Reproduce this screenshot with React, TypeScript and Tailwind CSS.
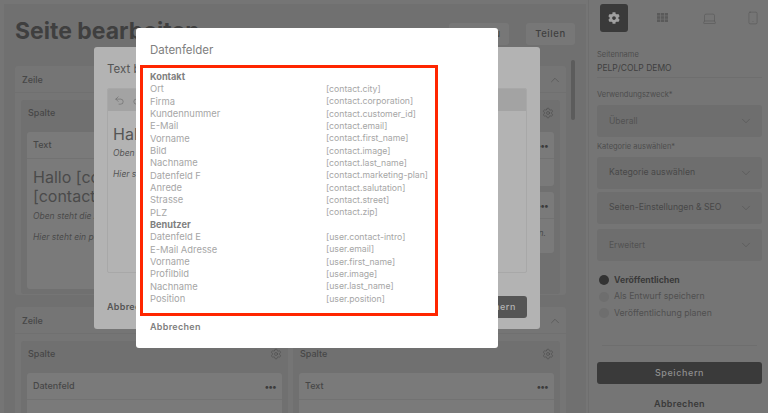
import React from "react";
import { ChevronDown, ChevronUp, Settings, Undo2, Redo2, Laptop, Smartphone } from "lucide-react";
import { FaCog } from "react-icons/fa";

const kontakt = [
  ["Ort", "[contact.city]"], ["Firma", "[contact.corporation]"], ["Kundennummer", "[contact.customer_id]"],
  ["E-Mail", "[contact.email]"], ["Vorname", "[contact.first_name]"], ["Bild", "[contact.image]"],
  ["Nachname", "[contact.last_name]"], ["Datenfeld F", "[contact.marketing-plan]"], ["Anrede", "[contact.salutation]"],
  ["Strasse", "[contact.street]"], ["PLZ", "[contact.zip]"],
];
const benutzer = [
  ["Datenfeld E", "[user.contact-intro]"], ["E-Mail Adresse", "[user.email]"], ["Vorname", "[user.first_name]"],
  ["Profilbild", "[user.image]"], ["Nachname", "[user.last_name]"], ["Position", "[user.position]"],
];

function Row({ a, b }: { a: string; b: string }) {
  return (
    <div className="flex h-[12.33px] items-center text-[#a6a6a6]">
      <span className="w-[176px] shrink-0 text-[9.4px]">{a}</span>
      <span className="text-[8.7px]">{b}</span>
    </div>
  );
}

function Dots() {
  return <span className="text-[9px] font-bold leading-none tracking-[-0.5px] text-[#3c3c3c]">•••</span>;
}

function Select({ label, strong }: { label: string; strong?: boolean }) {
  return (
    <div className="flex h-8 items-center justify-between rounded-[3px] bg-[#6e6e6e] pl-[12px] pr-[9px]">
      <span className={strong ? "text-[8.7px] text-[#484848]" : "text-[8.5px] text-[#525252]"}>{label}</span>
      <ChevronDown size={14} strokeWidth={0.9} className="text-[#4f4f4f]" />
    </div>
  );
}

function Radio({ label, active }: { label: string; active?: boolean }) {
  return (
    <div className="flex h-[16.5px] items-center gap-[5px] pl-[2px]">
      <span className={active ? "size-[10px] rounded-full bg-[#333333]" : "size-[10px] rounded-full bg-[#6e6e6e]"} />
      <span className={active ? "text-[8.7px] font-bold text-[#3a3a3a]" : "text-[8.7px] text-[#505050]"}>{label}</span>
    </div>
  );
}

function Card({ title, className, children }: { title: string; className: string; children?: React.ReactNode }) {
  return (
    <div className={"overflow-hidden rounded-[3px] bg-[#7a7a7a] " + className}>
      <div className="flex h-[27px] items-center justify-between border-b border-[#727272] pl-[6px] pr-[6px] text-[9px] font-medium text-[#474747]">
        <span>{title}</span>
        <Dots />
      </div>
      {children}
    </div>
  );
}

function Column({ className, children }: { className: string; children?: React.ReactNode }) {
  return (
    <div className={"w-[267px] rounded-[3px] bg-[#707070] px-[6px] " + className}>
      <div className="flex h-[32px] items-center justify-between pb-[6px] pl-[1px] text-[9px] font-medium text-[#474747]">
        <span>Spalte</span>
        <Settings size={12} strokeWidth={1} className="text-[#444444]" />
      </div>
      {children}
    </div>
  );
}

function RowHeader() {
  return (
    <div className="flex h-[27px] items-center justify-between border-b border-[#707070] pl-[7px] pr-[4px] pt-[1px] text-[9px] font-medium text-[#474747]">
      <span>Zeile</span>
      <ChevronUp size={14} strokeWidth={0.9} />
    </div>
  );
}

export default function App() {
  return (
    <div className="relative h-[413px] w-[768px] overflow-hidden bg-[#757575] font-['Inter','Noto_Sans',sans-serif]">
      <div className="flex h-full">
        <main className="h-full w-[589px] shrink-0 border-r border-[#6e6e6e] pb-0 pl-[4px] pr-[2px] pt-[4px]">
          <div className="h-full overflow-hidden bg-[#707070] px-[11px]">
            <div className="flex h-[62px] items-start justify-between">
              <h1 className="mt-[14px] text-[23px] font-bold leading-[26px] text-[#3f3f3f]">Seite bearbeiten</h1>
              <div className="mt-[19px] flex gap-[17px]">
                <div className="flex h-[22px] w-[60px] items-center justify-center rounded-[3px] bg-[#777777] text-[9.5px] text-[#3f3f3f]">Vorschau</div>
                <div className="flex h-[22px] w-[49px] items-center justify-center rounded-[3px] bg-[#777777] text-[9.5px] font-medium tracking-[0.6px] text-[#3f3f3f]">Teilen</div>
              </div>
            </div>
            <div className="flex justify-between">
              <div className="flex w-[551px] flex-col gap-[12px]">
                <section className="h-[229px] rounded-[3px] bg-[#757575]">
                  <RowHeader />
                  <div className="mt-[7px] flex gap-[5px] px-[6px]">
                    <Column className="h-[194px]">
                      <Card title="Text" className="h-[157px]">
                        <div className="px-[6px] pt-[9px] text-[#4a4a4a]">
                          <p className="text-[16px] leading-[18.5px]">Hallo [contact.first_name] [contact.last_name]</p>
                          <p className="mt-[5px] text-[8.5px] italic leading-[13px]">Oben steht die Anrede mit dem Vornamen.</p>
                          <p className="mt-[8px] text-[8.5px] italic leading-[13px]">Hier steht ein personalisierter Text.</p>
                        </div>
                      </Card>
                    </Column>
                    <Column className="h-[194px]">
                      <Card title="Text" className="h-[54px]" />
                      <Card title="Text" className="mt-[6px] h-[61px]">
                        <p className="pr-[8px] pt-[8px] text-right text-[8.5px] italic leading-[13px] text-[#4a4a4a]">Vornamen.</p>
                      </Card>
                    </Column>
                  </div>
                </section>
                <section className="h-[120px] rounded-[3px] bg-[#757575]">
                  <RowHeader />
                  <div className="mt-[7px] flex gap-[5px] px-[6px]">
                    <Column className="h-[90px]">
                      <Card title="Datenfeld" className="h-[60px]">
                        <div className="px-[6px] pt-[10px] text-[9px] text-[#4a4a4a]">Logotext</div>
                      </Card>
                    </Column>
                    <Column className="h-[90px]">
                      <Card title="Text" className="h-[60px]">
                        <div className="px-[6px] pt-[10px] text-[9px] text-[#4a4a4a]">Text</div>
                      </Card>
                    </Column>
                  </div>
                </section>
              </div>
              <div className="mt-[-6px] h-[60px] w-[4px] shrink-0 rounded-full bg-[#5c5c5c]" />
            </div>
          </div>
        </main>
        <aside className="flex h-full flex-1 flex-col pl-[8px] pr-[6px]">
          <div className="flex h-[32px] items-start justify-between pl-[3px] pr-[2px] pt-[4px]">
            <div className="flex size-[28px] items-center justify-center rounded-[3px] bg-[#3a3a3a]">
              <FaCog size={12} className="text-[#a0a0a0]" />
            </div>
            <svg width="11" height="9" viewBox="0 0 11 9" className="mr-[6px] mt-[9px]" fill="#5a5a5a">
              <rect x="0" y="0" width="3.2" height="2.6" /><rect x="3.9" y="0" width="3.2" height="2.6" /><rect x="7.8" y="0" width="3.2" height="2.6" />
              <rect x="0" y="3.2" width="3.2" height="2.6" /><rect x="3.9" y="3.2" width="3.2" height="2.6" /><rect x="7.8" y="3.2" width="3.2" height="2.6" />
              <rect x="0" y="6.4" width="3.2" height="2.6" /><rect x="3.9" y="6.4" width="3.2" height="2.6" /><rect x="7.8" y="6.4" width="3.2" height="2.6" />
            </svg>
            <Laptop size={15} strokeWidth={0.9} className="mt-[7px] text-[#555555]" />
            <Smartphone size={14} strokeWidth={0.9} className="mt-[7px] text-[#555555]" />
          </div>
          <label className="mt-[19px] text-[7.5px] leading-[8px] text-[#4d4d4d]">Seitenname</label>
          <div className="mt-[1px] flex h-[18px] items-center border-b border-[#6e6e6e] text-[8.5px] text-[#404040]">PELP/COLP DEMO</div>
          <label className="mt-[13px] text-[7.5px] leading-[8px] text-[#4d4d4d]">Verwendungszweck*</label>
          <div className="mt-[6px]"><Select label="Überall" /></div>
          <label className="mt-[6px] text-[7.5px] leading-[8px] text-[#4d4d4d]">Kategorie auswählen*</label>
          <div className="mt-[6px] flex flex-col gap-[3px]">
            <Select label="Kategorie auswählen" strong />
            <Select label="Seiten-Einstellungen & SEO" strong />
            <div className="mt-[2px]"><Select label="Erweitert" /></div>
          </div>
          <div className="mt-[11px] flex flex-col">
            <Radio label="Veröffentlichen" active />
            <Radio label="Als Entwurf speichern" />
            <Radio label="Veröffentlichung planen" />
          </div>
          <div className="mx-[5px] mt-[23px] border-t border-[#6e6e6e]" />
          <div className="mt-[16px] flex h-[22px] items-center justify-center rounded-[3px] bg-[#3a3a3a] text-[9px] font-medium tracking-[0.6px] text-[#8f8f8f]">Speichern</div>
          <div className="mt-[13px] text-center text-[9px] font-semibold leading-[13px] tracking-[0.3px] text-[#3a3a3a]">Abbrechen</div>
        </aside>
      </div>

      <div className="absolute left-[94px] top-[47px] flex h-[282px] w-[446px] flex-col rounded-[3px] bg-[#b3b3b3] px-[13px]">
        <h2 className="mt-[15px] text-[11.5px] leading-[14px] text-[#555555]">Text bearbeiten</h2>
        <div className="mt-[12px] h-[185px] shrink-0 overflow-hidden rounded-[2px] border border-[#a8a8a8]">
          <div className="flex h-[22px] items-center gap-[7px] bg-[#a3a3a3] px-[6px] text-[#555555]">
            <Undo2 size={11} strokeWidth={1} />
            <Redo2 size={11} strokeWidth={1} />
          </div>
          <div className="px-[5px] pt-[13px] text-[#555555]">
            <p className="text-[16px] leading-[20px]">Hallo [contact.first_name]</p>
            <p className="mt-[3px] text-[8.5px] italic leading-[13px]">Oben steht die Anrede</p>
            <p className="mt-[8px] text-[8.5px] italic leading-[13px]">Hier steht ein Text</p>
          </div>
        </div>
        <div className="mt-[23px] flex h-[22px] items-center justify-between">
          <span className="text-[9px] font-semibold tracking-[0.3px] text-[#555555]">Abbrechen</span>
          <span className="flex h-[22px] items-center rounded-[3px] bg-[#555555] px-[11px] text-[9px] font-medium tracking-[0.6px] text-[#b3b3b3]">Speichern</span>
        </div>
      </div>

      <div className="absolute left-[136px] top-[28px] h-[320px] w-[362px] rounded-[3px] bg-white pt-[14px]">
        <h2 className="pl-[14px] text-[11.5px] leading-[16px] text-[#808080]">Datenfelder</h2>
        <div className="ml-[4px] mt-[7px] h-[251px] w-[298px] border-[3px] border-[#ff2600] pl-[7px] pt-[3px]">
          <div className="text-[9.2px] font-bold leading-[12.33px] text-[#808080]">Kontakt</div>
          {kontakt.map(([a, b]) => <Row key={b} a={a} b={b} />)}
          <div className="text-[9.2px] font-bold leading-[12.33px] text-[#808080]">Benutzer</div>
          {benutzer.map(([a, b]) => <Row key={b} a={a} b={b} />)}
        </div>
        <div className="mt-[3.5px] pl-[14px] text-[9px] font-semibold leading-[13px] tracking-[0.3px] text-[#808080]">Abbrechen</div>
      </div>
    </div>
  );
}
